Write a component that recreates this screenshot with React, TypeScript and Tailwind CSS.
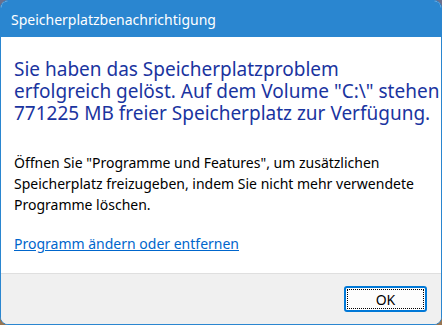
export default function App() {
  return (
    <div className="h-[325px] w-[442px] bg-gradient-to-b from-[#6b6f8c] to-[#9a7550]">
      <div
        className="flex h-[325px] w-[442px] flex-col overflow-hidden rounded-[8px] border border-[#2a86d0] bg-white"
        style={{ fontFamily: '"Noto Sans", "Open Sans", sans-serif' }}
      >
        <div className="flex h-[36px] shrink-0 items-center bg-[#2a86d0] pl-[10px] text-[14px] text-white">
          Speicherplatzbenachrichtigung
        </div>
        <div className="flex-1 px-[13px] pt-[21px]">
          <p className="whitespace-nowrap text-[19px] leading-[22px] text-[#1a34a0]">
            Sie haben das Speicherplatzproblem
            <br />
            erfolgreich gelöst. Auf dem Volume "C:\" stehen
            <br />
            771225 MB freier Speicherplatz zur Verfügung.
          </p>
          <p className="mt-[28px] whitespace-nowrap text-[14px] leading-[21px] text-black">
            Öffnen Sie "Programme und Features", um zusätzlichen
            <br />
            Speicherplatz freizugeben, indem Sie nicht mehr verwendete
            <br />
            Programme löschen.
          </p>
          <a href="#" className="mt-[18px] inline-block text-[14px] leading-[21px] text-[#0066cc] underline">
            Programm ändern oder entfernen
          </a>
        </div>
        <div className="flex h-[51px] shrink-0 items-center justify-end border-t border-[#dfdfdf] bg-[#f0f0f0] pr-[14px]">
          <button className="flex h-[26px] w-[83px] items-center justify-center rounded-[3px] border-2 border-[#0078d7] bg-[#fdfdfd] p-[1px]">
            <span className="flex h-full w-full items-center justify-center border border-dotted border-black text-[14px] text-black">
              OK
            </span>
          </button>
        </div>
      </div>
    </div>
  );
}
